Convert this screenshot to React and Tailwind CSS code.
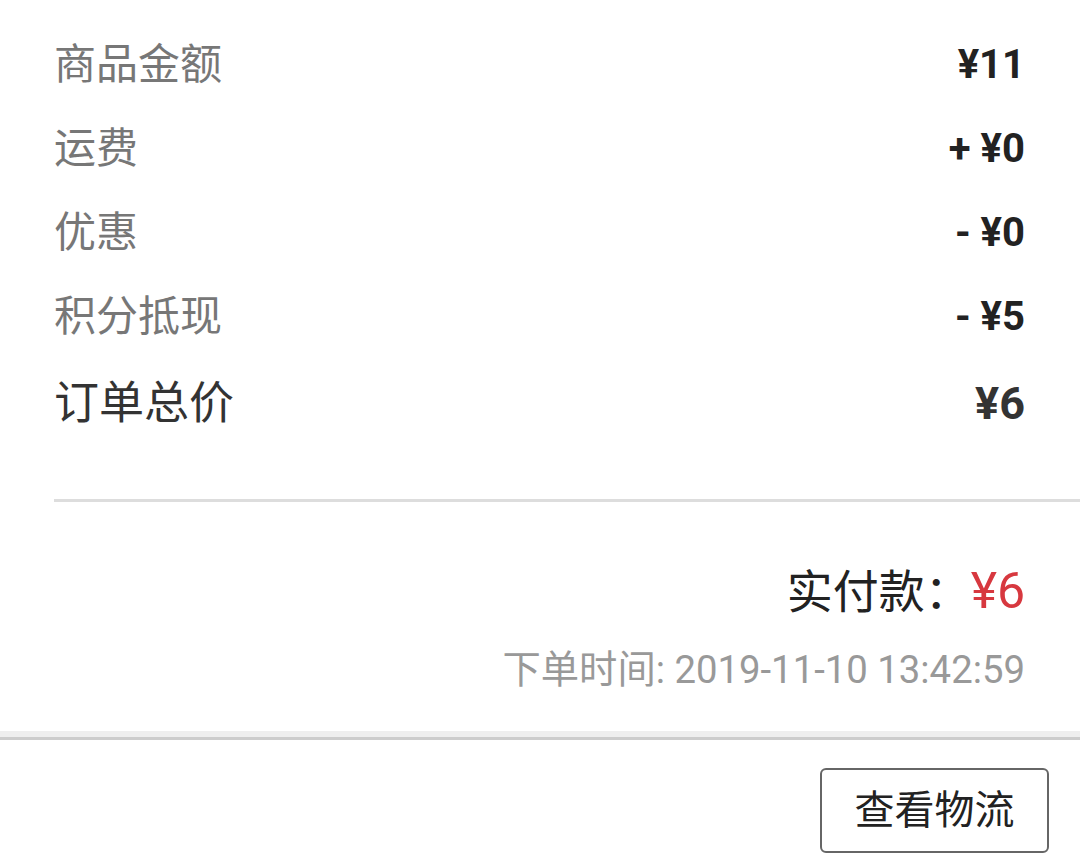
export default function App() {
  const font = { fontFamily: 'Roboto, "Noto Sans CJK SC", sans-serif' };
  const rows = [
    ["商品金额", "¥11"],
    ["运费", "+ ¥0"],
    ["优惠", "- ¥0"],
    ["积分抵现", "- ¥5"],
  ];
  return (
    <div className="w-[1080px] h-[855px] bg-white overflow-hidden" style={font}>
      <div className="pl-[54px] pt-[23px]">
        <div className="pr-[55px]">
          {rows.map(([l, v]) => (
            <div key={l} className="h-[84px] flex items-center justify-between">
              <span className="text-[42px] text-[#777777] leading-none">{l}</span>
              <span className="text-[40px] font-bold text-[#222222] leading-none">{v}</span>
            </div>
          ))}
          <div className="h-[88px] flex items-center justify-between">
            <span className="text-[45px] text-[#333333] leading-none">订单总价</span>
            <span className="text-[45px] font-bold text-[#333333] leading-none">¥6</span>
          </div>
        </div>
        <div className="mt-[52px] h-[3px] bg-[#dddddd]" />
        <div className="pr-[55px] flex flex-col items-end">
          <div className="mt-[64px] flex items-baseline leading-none">
            <span className="text-[46px] text-[#222222]">实付款：</span>
            <span className="text-[50px] text-[#d7383f]">¥6</span>
          </div>
          <div className="mt-[35px] text-[38.3px] text-[#999999] leading-none">下单时间: 2019-11-10 13:42:59</div>
        </div>
      </div>
      <div className="mt-[42px] h-[6px] bg-[#eeeeee]" />
      <div className="h-[3px] bg-[#cccccc]" />
      <div className="flex justify-end pr-[31px] pt-[28px]">
        <button className="w-[229px] h-[85px] border-2 border-[#666666] rounded-[6px] text-[40px] text-[#222222] flex items-center justify-center leading-none">
          查看物流
        </button>
      </div>
    </div>
  );
}
